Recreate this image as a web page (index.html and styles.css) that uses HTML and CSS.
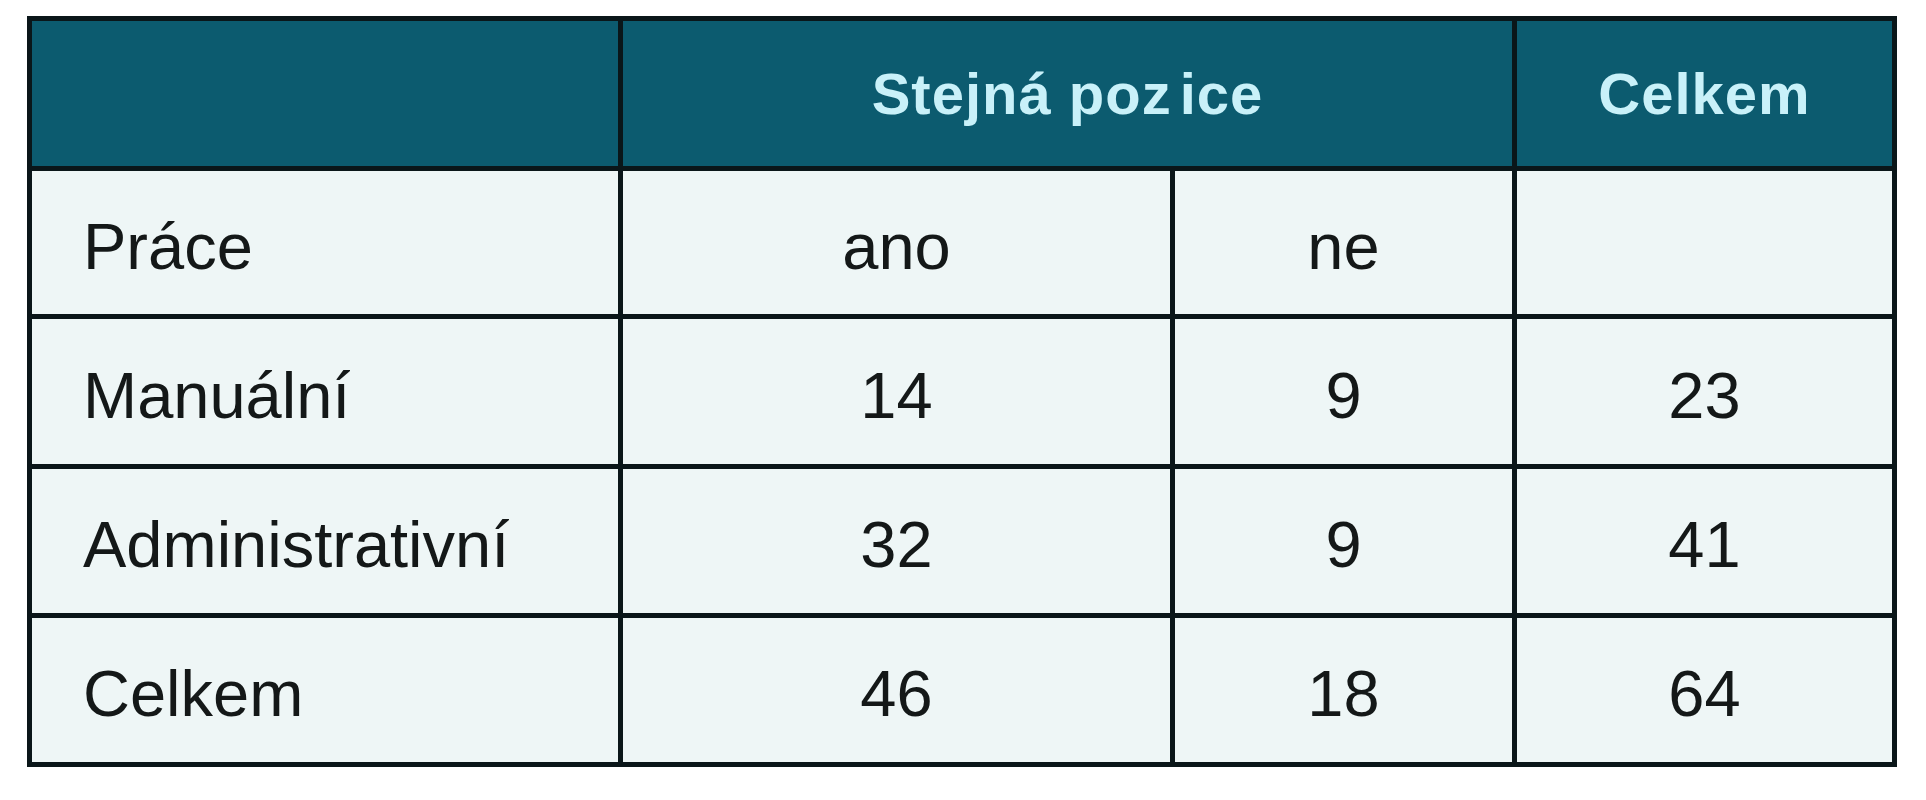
FILE: index.html
```html
<!DOCTYPE html>
<html lang="cs">
<head>
<meta charset="utf-8">
<title>Stejná pozice</title>
<link rel="stylesheet" href="styles.css">
</head>
<body>
<div class="page">
  <div class="grid">
    <div class="cell head"></div>
    <div class="cell head span2">Stejná poz<span class="gap">ice</span></div>
    <div class="cell head">Celkem</div>

    <div class="cell label">Práce</div>
    <div class="cell">ano</div>
    <div class="cell">ne</div>
    <div class="cell"></div>

    <div class="cell label">Manuální</div>
    <div class="cell">14</div>
    <div class="cell">9</div>
    <div class="cell">23</div>

    <div class="cell label">Administrativní</div>
    <div class="cell">32</div>
    <div class="cell">9</div>
    <div class="cell">41</div>

    <div class="cell label">Celkem</div>
    <div class="cell">46</div>
    <div class="cell">18</div>
    <div class="cell">64</div>
  </div>
</div>
</body>
</html>
```

FILE: styles.css
```css
html, body {
  margin: 0;
  padding: 0;
  background: #ffffff;
}

.page {
  padding: 16px 0 0 27px;
}

.grid {
  display: grid;
  width: max-content;
  grid-template-columns: 586px 547px 337px 375px;
  grid-template-rows: 145px 143px 145px 144px 144px;
  gap: 5px;
  padding: 5px;
  background: #0a1619;
  font-family: "Liberation Sans", Arial, sans-serif;
}

.cell {
  background: #eef6f6;
  color: #141818;
  font-size: 65px;
  display: flex;
  align-items: center;
  justify-content: center;
  padding-top: 7px;
  box-sizing: border-box;
}

.cell.label {
  justify-content: flex-start;
  padding-left: 51px;
}

.cell.head {
  background: #0c5b6f;
  color: #c9f1f9;
  font-weight: bold;
  font-size: 58px;
  letter-spacing: 1px;
  padding-top: 0;
}

.span2 {
  grid-column: span 2;
}

.gap {
  margin-left: 8px;
}
```
